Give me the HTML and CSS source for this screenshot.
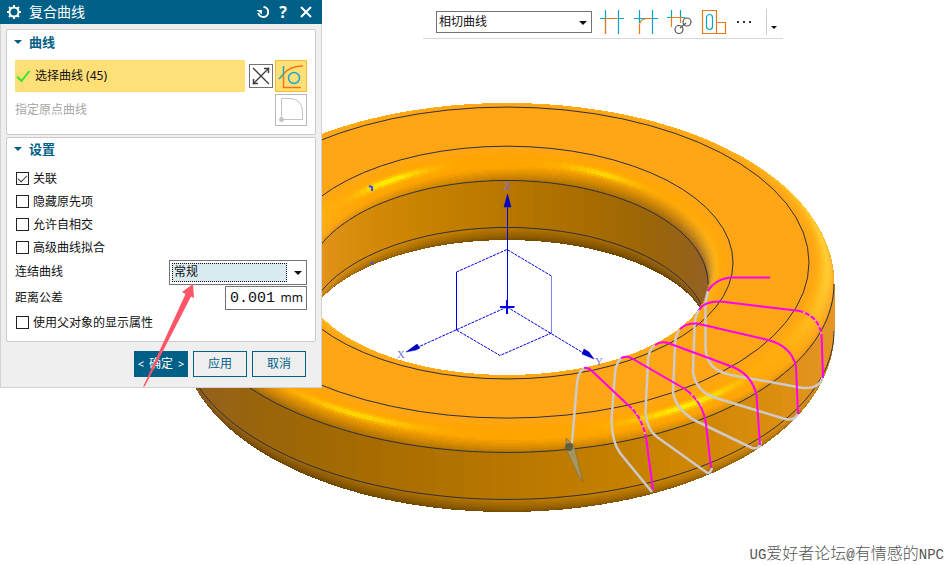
FILE: index.html
```html
<!DOCTYPE html>
<html lang="zh-CN">
<head>
<meta charset="utf-8">
<title>复合曲线</title>
<link rel="stylesheet" href="styles.css">
</head>
<body>
<svg class="scene" viewBox="0 0 946 565" preserveAspectRatio="xMinYMin meet" aria-hidden="true">
  <g id="ring"></g>
  <g fill="none" stroke="#3a50ff" stroke-width="2">
    <path d="M369 186l3 1v4M371 264l2-2"/>
  </g>
  <g class="axes" fill="none" stroke="#0000e6">
    <path d="M507.500 307V206M456.500 330V272"/>
    <path d="M456.500 272L507 249.500L551.500 276" stroke-dasharray="3 1"/>
    <path d="M551.500 276V333" stroke="#8080ff"/>
    <path d="M507 307L416 348M507 307L585 354M456.500 330L500 355.500L551.500 333" stroke-dasharray="3 1"/>
    <path d="M500 307H514.500M507 300V314" stroke-width="2"/>
    <path d="M507.500 194L511 207H504ZM406 352L417 344L420 348L416 350ZM594 359L582 354L584 349L589 352Z" fill="#0000c8" stroke="#0000c8" stroke-width="0.500"/>
  </g>
  <g class="axis-labels">
    <text x="504" y="190">Z</text>
    <text x="397" y="358">X</text>
    <text x="595" y="365">Y</text>
  </g>
  <g fill="none" stroke="#cdcac8" stroke-width="2.500" stroke-linejoin="round">
    <path d="M708 291Q705 300 705.500 312V348Q706 370 731 375L803 388Q820 389 823 376"/>
    <path d="M699 310Q694 318 694.500 330L693 372Q696 392 716 398L785 419Q796 421 798 413"/>
    <path d="M679 330Q675 337 675 345L673 392Q675 408 694 420L752 448Q760 450 761 441"/>
    <path d="M655 345Q648 350 648 362L645.500 412Q647 430 657 437L706 472Q710 475 712 468"/>
    <path d="M622 358Q616 362 615 373L611.500 420Q612 442 620 453L652 492"/>
    <path d="M587 368Q579 368 577 383L572 443"/>
  </g>
  <g fill="none" stroke="#ff00f0" stroke-width="2" stroke-linejoin="round">
    <path d="M770 277.500H733Q716 278 708 291"/>
    <path d="M823 378L821.500 334Q818 316 800 311L721 301.500Q704 301 699 310"/>
    <path d="M798 414L796 366Q791 346 768 340L697 323.500Q686 323 680 329"/>
    <path d="M760 445L756.500 395Q752 375 733 367L668 343Q661 341 655 345"/>
    <path d="M711 468L706 424Q703 402 685 389L633 359Q628 355 621 358"/>
    <path d="M653 490L646 437Q641 415 628 405L592 371Q588 367 584 368"/>
  </g>
  <g fill="none" stroke="#e9bd8a" stroke-width="2" stroke-dasharray="2 5">
    <path d="M821.500 334Q818 316 800 311M702 406Q696 397 688 391M645 434Q641 415 632 408"/>
  </g>
  <path d="M566 438L574 446L583 482L578 475L566 449Z" fill="#a6955f" stroke="#6e6340" stroke-width="0.500"/>
  <circle cx="569" cy="447" r="4" fill="#655d3f"/>
</svg>

<main class="workspace">
  <form class="dialog" aria-labelledby="dialog-title">
    <header class="titlebar">
      <svg width="16" height="16" viewBox="0 0 16 16"><circle cx="8" cy="8" r="4.500" fill="none" stroke="#fff" stroke-width="2"/><path d="M8 1V4M8 12V15M1 8H4M12 8H15M3 3L5 5M11 11L13 13M13 3L11 5M5 11L3 13" stroke="#fff" stroke-width="2"/></svg>
      <h1 id="dialog-title">复合曲线</h1>
      <button type="button" class="title-button" aria-label="重置"><svg width="14" height="14" viewBox="0 0 14 14"><path d="M7.500 2A5 5 0 1 1 2.300 8" fill="none" stroke="#fff" stroke-width="2"/><path d="M0.500 5H6V9.500Z" fill="#fff"/></svg></button>
      <button type="button" class="title-button help" aria-label="帮助">?</button>
      <button type="button" class="title-button" aria-label="关闭"><svg width="14" height="14" viewBox="0 0 14 14"><path d="M2 2L12 12M12 2L2 12" stroke="#fff" stroke-width="2"/></svg></button>
    </header>

    <section class="group curves">
      <h2>曲线</h2>
      <div class="row">
        <div class="selection">
          <svg width="16" height="16" viewBox="0 0 16 16"><path d="M2 8.500L6.500 13L14.500 3" fill="none" stroke="#35e52b" stroke-width="2"/></svg>
          <span>选择曲线 (45)</span>
        </div>
        <button type="button" class="tool small" aria-label="反向"><svg width="20" height="20" viewBox="0 0 20 20" fill="none" stroke="#3d3d3d"><path d="M2 2L18 18M2 18L18 2" stroke-width="1.300"/><path d="M13 2.500H17.500V7M2.500 13V17.500H7" stroke-width="1.500"/></svg></button>
        <button type="button" class="tool active" aria-label="曲线规则"><svg width="30" height="30" viewBox="0 0 30 30" fill="none"><path d="M7.500 14V26.500H25M7.500 13Q14 5 27 5" stroke="#ee7912" stroke-width="1.500"/><path d="M7.500 5V13L3 18" stroke="#23a6bd" stroke-width="1.500"/><circle cx="18" cy="17" r="5.500" stroke="#23a6bd" stroke-width="1.500"/></svg></button>
      </div>
      <div class="row origin">
        <span class="muted">指定原点曲线</span>
        <button type="button" class="tool disabled" aria-label="原点曲线" disabled><svg width="30" height="30" viewBox="0 0 30 30" fill="none" stroke="#c3c3c3"><path d="M5.500 24V3.500H15Q26 5 26.500 16V24.500H6"/><circle cx="5.500" cy="24.500" r="2" fill="#c3c3c3"/></svg></button>
      </div>
    </section>

    <section class="group settings">
      <h2>设置</h2>
      <label class="check"><input type="checkbox" checked>关联</label>
      <label class="check"><input type="checkbox">隐藏原先项</label>
      <label class="check"><input type="checkbox">允许自相交</label>
      <label class="check"><input type="checkbox">高级曲线拟合</label>
      <div class="field">
        <label for="join">连结曲线</label>
        <div class="combo join"><select id="join"><option>常规</option></select></div>
      </div>
      <div class="field">
        <label for="tolerance">距离公差</label>
        <div class="measure"><input id="tolerance" type="text" value="0.001"><span>mm</span></div>
      </div>
      <label class="check"><input type="checkbox">使用父对象的显示属性</label>
    </section>

    <footer class="actions">
      <button type="button" class="primary"><span>&lt;</span>确定<span>&gt;</span></button>
      <button type="button">应用</button>
      <button type="button">取消</button>
    </footer>
    <svg class="pointer" width="60" height="106" viewBox="0 0 60 106" aria-hidden="true"><path d="M1 105L43.500 12L40 10L51 2L52 16L49 14.500L3 104Z" fill="#ff5568"/></svg>
  </form>

  <div class="toolbar" role="toolbar" aria-label="选择意图">
    <div class="combo rule"><select aria-label="曲线规则"><option>相切曲线</option></select></div>
    <button type="button" aria-label="在相交处停止"><svg width="26" height="26" viewBox="0 0 26 26" fill="none" stroke-width="1.200"><path d="M1 9.500H25M6.500 1V25M19.500 1V25" stroke="#00a5c8"/><path d="M6.500 25V9.500H19" stroke="#ee7912"/></svg></button>
    <button type="button" aria-label="跟随圆角"><svg width="26" height="26" viewBox="0 0 26 26" fill="none" stroke-width="1.200"><path d="M1 9.500H25M6.500 1V14M19.500 1V25" stroke="#00a5c8"/><path d="M6.500 25V16Q7 10 14 9.500H19" stroke="#ee7912"/></svg></button>
    <button type="button" aria-label="特征内链接"><svg width="26" height="26" viewBox="0 0 26 26" fill="none" stroke-width="1.200"><path d="M0 8.500H18M4.500 1V9M13.500 1V9" stroke="#00a5c8"/><path d="M4.500 18V8.500H13.500V14" stroke="#ee7912"/><circle cx="20" cy="13" r="4" stroke="#555"/><circle cx="12" cy="20.500" r="4" stroke="#555"/><path d="M13 19L19 14" stroke="#555"/></svg></button>
    <button type="button" aria-label="路径选择"><svg width="26" height="26" viewBox="0 0 26 26" fill="none" stroke-width="1.200"><path d="M1.500 1.500H15.500V24.500H1.500ZM15.500 13.500H24.500V24.500H15.500" stroke="#ee7912"/><rect x="5.500" y="5.500" width="6" height="15" rx="3" stroke="#00a5c8"/></svg></button>
    <button type="button" class="more" aria-label="更多"><svg width="26" height="26" viewBox="0 0 26 26"><path d="M2 12h2v2H2zM8 12h2v2H8zM14 12h2v2h-2z" fill="#333"/></svg></button>
    <button type="button" class="overflow" aria-label="工具条选项"></button>
  </div>
</main>
<p class="signature"><span>UG</span>爱好者论坛<span>@</span>有情感的<span>NPC</span></p>
<script src="ring.js"></script>
</body>
</html>
```
FILE: styles.css
```css
* { box-sizing: border-box; }

body {
  position: relative;
  min-height: 100vh;
  margin: 0;
  overflow: hidden;
  background: #fff;
  color: #111;
  font: 12px/16px "Noto Sans", "Noto Sans CJK SC", sans-serif;
}

button, input, select { margin: 0; font: inherit; color: inherit; }
button { display: flex; align-items: center; justify-content: center; padding: 0; border: 0; background: none; }
svg { display: block; flex: none; }

.scene { position: absolute; inset: 0; width: 100%; }
.axis-labels { fill: #7b6ee8; font: 11px "Liberation Serif", serif; }

.workspace { position: relative; display: flex; align-items: flex-start; }

.dialog {
  position: relative;
  flex: 0 0 322px;
  padding-bottom: 10px;
  border: solid #d2d2d2;
  border-width: 0 1px 1px;
  background: #efefef;
}
.titlebar {
  display: flex;
  align-items: center;
  gap: 4px;
  height: 24px;
  margin: 0 -1px;
  padding: 0 8px 0 6px;
  background: #005f87;
  color: #fff;
}
.titlebar h1 { flex: 1; margin: 0 0 0 3px; font-size: 14px; font-weight: 400; }
.title-button { width: 16px; height: 20px; }
.title-button:last-child { margin-left: 3px; }
.help { font-size: 16px; font-weight: 700; }

.group {
  margin: 5px 5px 0;
  padding: 4px 8px 8px;
  border: 1px solid #cbcbcb;
  border-radius: 2px;
  background: #fff;
}
.group h2 {
  display: flex;
  align-items: center;
  gap: 7px;
  margin: 0 0 0 -1px;
  color: #005f87;
  font-size: 13px;
  line-height: 16px;
}
.group h2::before { content: ""; border: solid transparent; border-width: 4px 4px 0; border-top-color: #005f87; }
.settings { margin-top: 2px; padding: 3px 8px 7px; }

.row { display: flex; align-items: center; margin-top: 10px; }
.origin { justify-content: space-between; margin-top: 2px; }
.muted { color: #a6a6a6; }
.selection { display: flex; flex: 1; align-items: center; gap: 4px; height: 32px; background: #ffe078; }
.tool { width: 32px; height: 32px; border: 1px solid #ffbd25; background: #fff; }
.tool.active { background: #ffe078; }
.tool.small { width: 24px; height: 24px; margin: 0 2px 0 4px; border-color: #737373; }
.tool.disabled { border-color: #b9b9b9; }

.check { display: flex; align-items: center; gap: 4px; height: 23px; }
.check input {
  appearance: none;
  display: grid;
  place-items: center;
  width: 13px;
  height: 13px;
  margin-left: 1px;
  border: 1px solid #222;
  background: #fff;
}
.check input:checked::before {
  content: "";
  width: 8px;
  height: 4px;
  margin-bottom: 3px;
  border: solid #333;
  border-width: 0 0 1px 1px;
  transform: rotate(-45deg);
}
.settings h2 + .check { margin-top: 10px; }
.field { display: flex; align-items: center; justify-content: space-between; height: 26px; }

.combo { position: relative; display: flex; border: 1px solid #737373; background: #fff; }
.combo::after {
  content: "";
  position: absolute;
  top: 50%;
  right: 4px;
  margin-top: -1px;
  border: solid transparent;
  border-width: 4px 4px 0;
  border-top-color: #111;
  pointer-events: none;
}
.combo select { appearance: none; flex: 1; min-width: 0; padding: 0 2px; border: 0; border-radius: 0; outline: 0; background: none; }
.join { width: 138px; height: 25px; padding: 2px 19px 2px 2px; }
.join select { padding: 0 1px; border: 1px dotted #111; background: #d9eaf0; }
.measure { display: flex; align-items: center; width: 82px; height: 24px; padding: 0 3px 0 4px; border: 1px solid #737373; }
.measure input { flex: 1; min-width: 0; padding: 0; border: 0; outline: 0; background: none; font: 15px "Liberation Mono", monospace; }

.actions { display: flex; justify-content: flex-end; gap: 5px; margin-top: 9px; padding-right: 15px; }
.actions button { width: 54px; height: 26px; border: 1px solid #005f87; color: #005f87; }
.actions .primary { gap: 5px; background: #005f87; color: #fff; }
.primary span { font-size: 11px; }

.pointer { position: absolute; left: 141px; top: 282px; pointer-events: none; }

.toolbar {
  display: flex;
  align-items: center;
  height: 39px;
  margin-left: 101px;
  padding: 5px 3px 0 13px;
  border-bottom: 1px solid #d8d8d8;
}
.rule { width: 156px; height: 22px; margin-right: 7px; }
.toolbar button { width: 26px; height: 26px; margin-right: 8px; }
.toolbar .more { margin-right: 5px; }
.toolbar .overflow { width: 14px; margin: 0; border-left: 1px solid #d0d0d0; }
.overflow::before { content: ""; margin-top: 12px; border: solid transparent; border-width: 3px 3px 0; border-top-color: #111; }

.signature {
  position: absolute;
  right: 2px;
  bottom: 2px;
  margin: 0;
  color: #555;
  font: 300 16px/20px "Noto Sans CJK SC", sans-serif;
}
.signature span { font: 14px "Liberation Mono", monospace; }
```
FILE: ring.js
```javascript
// Shaded ring: a washer with rounded edges, seen from about 31 degrees above.
const SIN = 0.515, COS = 0.857;
const CX = 507, CY = 284, DEPTH = 47, TUBE = 25;
const OUTER = 302, INNER = 226;
const root = document.getElementById('ring');
const rad = d => d * Math.PI / 180;

function add(tag, attrs) {
  const el = document.createElementNS('http://www.w3.org/2000/svg', tag);
  for (const key in attrs) el.setAttribute(key, attrs[key]);
  root.appendChild(el);
}

const lobe = (n, h, power) =>
  Math.pow(Math.max(0, n[0] * h[0] + n[1] * h[1] + n[2] * h[2]), power);

function shade(n) {
  const up = n[2] > 0 ? 0.5 * n[2] : 0.33 * n[2];
  const light = Math.min(1, 0.72 + 0.16 * n[0] + up);
  const side = Math.pow(Math.abs(n[0]), 4);
  const rim = lobe(n, [0.7, -0.08, 0.7], 14) + 0.4 * lobe(n, [-0.8, 0, 0.6], 12);
  const glow = lobe(n, [0.4, 0.59, 0.7], 110) + 0.6 * lobe(n, [-0.325, 0.628, 0.707], 110);
  const back = n[1] < 0 ? -n[1] * 25 : 0;
  const r = 255 * light + 4 * side;
  const g = 165 * light + 4 * side + 85 * glow + 42 * rim + back * 0.5;
  const b = 38 * side + 45 * rim + back + Math.pow(Math.max(0, n[2]), 12) * 22;
  return 'rgb(' + [r, g, b].map(v => Math.round(Math.min(255, v))).join() + ')';
}

const point = (radius, a, y) =>
  (CX + radius * Math.sin(a)).toFixed(1) + ',' + (y + SIN * radius * Math.cos(a)).toFixed(1);

// sign +1 faces away from the ring's centre, -1 faces the hole
function facing(a, phi, sign) {
  const c = Math.cos(phi) * sign;
  return [c * Math.sin(a), c * Math.cos(a), Math.sin(phi)];
}
const visible = n => n[1] * COS + n[2] * SIN > -0.03;

function patch(points, n) {
  const colour = shade(n);
  add('polygon', { points: points.join(' '), fill: colour, stroke: colour, 'stroke-width': 1, 'shape-rendering': 'crispEdges' });
}

function fillet(radius, y, from, to, sign) {
  const steps = 18, turn = 2.5;
  for (let d = -180; d < 180; d += turn) {
    for (let i = 0; i < steps; i++) {
      const p0 = rad(from + (to - from) * i / steps), p1 = rad(from + (to - from) * (i + 1) / steps);
      const n = facing(rad(d + turn / 2), (p0 + p1) / 2, sign);
      if (!visible(n)) continue;
      const at = (deg, p) => point(radius + sign * TUBE * Math.cos(p), rad(deg), y - COS * TUBE * Math.sin(p));
      patch([at(d, p0), at(d + turn, p0), at(d + turn, p1), at(d, p1)], n);
    }
  }
}

function wall(radius, sign) {
  const turn = 2.5;
  for (let d = -180; d < 180; d += turn) {
    const n = facing(rad(d + turn / 2), 0, sign);
    if (!visible(n)) continue;
    patch([point(radius, rad(d), CY), point(radius, rad(d + turn), CY),
      point(radius, rad(d + turn), CY + DEPTH), point(radius, rad(d), CY + DEPTH)], n);
  }
}

function edge(radius, y, from, to) {
  const pts = [];
  for (let d = from; d <= to; d += 2) pts.push(point(radius, rad(d), y));
  add('polyline', { points: pts.join(' '), fill: 'none', stroke: '#303038', 'stroke-width': 1 });
}

const TOP = CY - COS * TUBE;
const HOLE = INNER - TUBE, RIM = OUTER + TUBE;

fillet(INNER, CY + DEPTH, -90, 0, -1);
wall(HOLE, -1);
edge(HOLE, CY + DEPTH, 90, 270);
fillet(INNER, CY, 0, 90, -1);
edge(HOLE, CY, 90, 270);
fillet(OUTER, CY + DEPTH, -90, 0, 1);
wall(RIM, 1);
fillet(OUTER, CY, 0, 90, 1);

const ellipse = r => `M${CX - r},${TOP}a${r},${r * SIN} 0 1 0 ${2 * r},0a${r},${r * SIN} 0 1 0 ${-2 * r},0Z`;
add('path', { d: ellipse(OUTER) + ellipse(INNER), fill: '#ffa516', 'fill-rule': 'evenodd', stroke: '#303038', 'stroke-width': 1 });
edge(RIM, CY, -90, 90);
edge(RIM, CY + DEPTH, -90, 90);
```
